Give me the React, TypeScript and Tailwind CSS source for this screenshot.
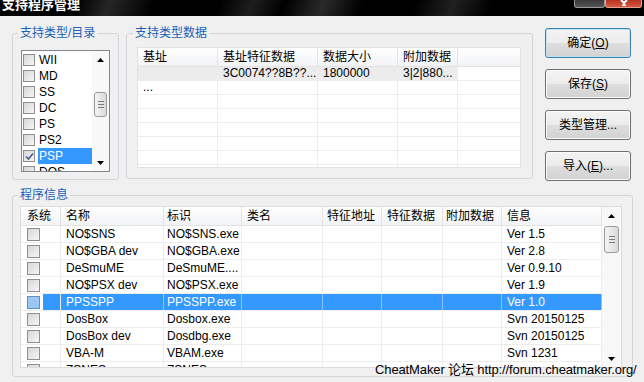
import React from 'react';

const FONT = "font-['Liberation_Sans','Noto_Sans_CJK_SC',sans-serif]";

const Arrow = ({ down = false }: { down?: boolean }) => (
  <svg width="7" height="4" viewBox="0 0 7 4">
    <path d={down ? 'M0 0H7L3.5 4Z' : 'M0 4H7L3.5 0Z'} fill="#000" />
  </svg>
);

const Grip = () => (
  <svg width="6" height="7" viewBox="0 0 6 7">
    <path d="M0 0.5H6M0 3.5H6M0 6.5H6" stroke="#7a7a7a" strokeWidth="1" />
  </svg>
);

const ScrollBar = ({ width, thumb }: { width: string; thumb: string }) => (
  <div className={`${width} h-full flex flex-col bg-[#f8f8f8]`}>
    <div className="h-[17px] flex items-center justify-center shrink-0">
      <Arrow />
    </div>
    <div className="flex-1 flex flex-col">
      <div className={`${thumb} mx-[2px] rounded-[3px] border border-[#9a9a9a] bg-gradient-to-r from-[#f5f5f5] to-[#dadada] flex items-center justify-center`}>
        <Grip />
      </div>
    </div>
    <div className="h-[17px] flex items-center justify-center shrink-0">
      <Arrow down />
    </div>
  </div>
);

const Check = ({ big = false, checked = false, tint = false }: { big?: boolean; checked?: boolean; tint?: boolean }) => (
  <span
    className={`shrink-0 border flex items-center justify-center ${big ? 'w-[13px] h-[13px]' : 'w-[12px] h-[12px]'} ${
      tint ? 'border-[#5f8fc8] bg-[#9cc6f0]' : 'border-[#8f8f8f] bg-gradient-to-br from-[#d6d6d6] to-[#f7f7f7]'
    }`}
  >
    {checked && (
      <svg width="9" height="9" viewBox="0 0 9 9">
        <path d="M1 4.5L3.5 7L8 1.5" stroke="#4a5c94" strokeWidth="1.6" fill="none" />
      </svg>
    )}
  </span>
);

const Button = ({ children, main = false }: { children: React.ReactNode; main?: boolean }) => (
  <div
    className={`h-[30px] w-[86px] rounded-[3px] border flex items-center justify-center text-[12px] text-black bg-[linear-gradient(#f4f4f4,#ececec_48%,#dedede_52%,#d2d2d2)] ${
      main ? 'border-[#3c7fb1] shadow-[inset_0_0_0_1px_#bfe4f8]' : 'border-[#707070] shadow-[inset_0_0_0_1px_#fbfbfb]'
    }`}
  >
    {children}
  </div>
);

const listItems = ['WII', 'MD', 'SS', 'DC', 'PS', 'PS2', 'PSP', 'DOS'];

const t2Cols = ['w-[80px]', 'w-[100px]', 'w-[80px]', 'w-[60px]'];
const t2Head = ['基址', '基址特征数据', '数据大小', '附加数据'];

const t3Cols = ['w-[40px]', 'w-[103px]', 'w-[78px]', 'w-[81px]', 'w-[59px]', 'w-[61px]', 'w-[59px]', 'w-[100px]'];
const t3Pad = ['pl-[6px]', 'pl-[5px]', 'pl-[3px]', 'pl-[5px]', 'pl-[4px]', 'pl-[5px]', 'pl-[3px]', 'pl-[5px]'];
const t3Head = ['系统', '名称', '标识', '类名', '特征地址', '特征数据', '附加数据', '信息'];

const programs = [
  ['NO$SNS', 'NO$SNS.exe', 'Ver 1.5'],
  ['NO$GBA dev', 'NO$GBA.exe', 'Ver 2.8'],
  ['DeSmuME', 'DeSmuME....', 'Ver 0.9.10'],
  ['NO$PSX dev', 'NO$PSX.exe', 'Ver 1.9'],
  ['PPSSPP', 'PPSSPP.exe', 'Ver 1.0'],
  ['DosBox', 'Dosbox.exe', 'Svn 20150125'],
  ['DosBox dev', 'Dosdbg.exe', 'Svn 20150125'],
  ['VBA-M', 'VBAM.exe', 'Svn 1231'],
  ['ZSNES', 'ZSNES.exe', ''],
];

export default function App() {
  return (
    <div className={`${FONT} relative w-[644px] h-[382px] overflow-hidden bg-[#f0f0f0] text-[12px] text-black flex flex-col`}>
      {/* title bar */}
      <div className="h-[16px] shrink-0 flex justify-between overflow-hidden bg-[linear-gradient(110deg,#000_0%,#000_12%,#262626_17%,#000_24%,#000_34%,#1e1e1e_39%,#000_44%,#2a2a2a_50%,#000_56%,#000_64%,#202020_70%,#000_76%,#000_100%)]">
        <div className="ml-[2px] -mt-[2px] text-white font-bold text-[13px] leading-[14px]">支持程序管理</div>
        <div className="flex mr-[2px]">
          <div className="w-[31px] h-[8px] rounded-b-[3px] border border-t-0 border-[#9a9a9a] bg-gradient-to-b from-[#3a3a3a] to-[#555]" />
          <div className="w-[37px] h-[8px] rounded-b-[3px] border border-t-0 border-[#e7a192] bg-gradient-to-b from-[#b5331f] to-[#d45a44] flex justify-center">
            <svg width="10" height="6" viewBox="0 0 10 6">
              <path d="M2 0L5 3L8 0M3.5 6L5 4.5L6.5 6" stroke="#fff" strokeWidth="2" fill="none" />
            </svg>
          </div>
        </div>
      </div>

      {/* top section */}
      <div className="flex items-start pl-[12px] mt-[10px]">
        <fieldset className="w-[107px] h-[154px] border border-[#d2d6da] rounded-[3px]">
          <legend className="ml-[5px] px-[2px] leading-[14px] text-[#1a5fb8]">支持类型/目录</legend>
          <div className="mt-[10px] ml-[8px] w-[89px] h-[122px] border border-[#828790] bg-white flex overflow-hidden">
            <div className="flex-1 flex flex-col pt-[1px]">
              {listItems.map((it) => (
                <div key={it} className="h-[16px] shrink-0 flex items-center">
                  <span className="ml-[1px]">
                    <Check checked={it === 'PSP'} />
                  </span>
                  <span
                    className={`ml-[3px] flex-1 h-[16px] leading-[16px] pl-[1px] ${
                      it === 'PSP' ? 'bg-[#3399ff] text-white' : ''
                    }`}
                  >
                    {it}
                  </span>
                </div>
              ))}
            </div>
            <ScrollBar width="w-[17px]" thumb="mt-[24px] h-[25px]" />
          </div>
        </fieldset>

        <fieldset className="ml-[7px] w-[407px] h-[153px] border border-[#d2d6da] rounded-[3px]">
          <legend className="ml-[6px] px-[2px] leading-[14px] text-[#1a5fb8]">支持类型数据</legend>
          <div className="mt-[7px] ml-[10px] w-[384px] h-[121px] border border-[#e2e2e2] bg-white flex flex-col overflow-hidden">
            <div className="h-[19px] shrink-0 flex bg-gradient-to-b from-white to-[#f2f3f5] border-b border-[#e3e3e3]">
              {t2Head.map((h, i) => (
                <div key={h} className={`${t2Cols[i]} shrink-0 pl-[5px] leading-[18px] border-r border-[#e3e3e3]`}>
                  {h}
                </div>
              ))}
              <div className="flex-1" />
            </div>
            {Array.from({ length: 8 }).map((_, r) => (
              <div key={r} className="h-[14px] shrink-0 flex border-b border-[#ededed]">
                {t2Cols.map((w, i) => (
                  <div
                    key={i}
                    className={`${w} shrink-0 pl-[5px] leading-[13px] border-r border-[#ededed] whitespace-nowrap overflow-hidden ${
                      r === 0 ? 'bg-[#ececec]' : ''
                    }`}
                  >
                    {r === 0 && i === 1 && '3C0074??8B??...'}
                    {r === 0 && i === 2 && '1800000'}
                    {r === 0 && i === 3 && '3|2|880...'}
                    {r === 1 && i === 0 && '...'}
                  </div>
                ))}
                <div className="flex-1" />
              </div>
            ))}
          </div>
        </fieldset>

        <div className="ml-[12px] mt-[2px] flex flex-col gap-[11px]">
          <Button main>
            确定(<span className="underline">O</span>)
          </Button>
          <Button>
            保存(<span className="underline">S</span>)
          </Button>
          <Button>类型管理...</Button>
          <Button>
            导入(<span className="underline">E</span>)...
          </Button>
        </div>
      </div>

      {/* program info */}
      <fieldset className="ml-[12px] mt-[7px] w-[621px] h-[189px] border border-[#d2d6da] rounded-[3px]">
        <legend className="ml-[5px] px-[2px] leading-[14px] text-[#1a5fb8]">程序信息</legend>
        <div className="mt-[4px] ml-[7px] w-[602px] h-[162px] border border-[#dcdcdc] bg-white flex overflow-hidden">
          <div className="w-[581px] flex flex-col">
            <div className="h-[19px] shrink-0 flex bg-gradient-to-b from-white to-[#f2f3f5] border-b border-[#e3e3e3]">
              {t3Head.map((h, i) => (
                <div key={h} className={`${t3Cols[i]} ${t3Pad[i]} shrink-0 leading-[18px] border-r border-[#e3e3e3]`}>
                  {h}
                </div>
              ))}
            </div>
            {programs.map((p, r) => {
              const sel = r === 4;
              return (
                <div key={r} className="h-[17px] shrink-0 flex border-b border-[#ededed]">
                  {t3Cols.map((w, i) => {
                    if (i === 0) {
                      return (
                        <div key={i} className={`${w} shrink-0 flex items-center border-r border-[#ededed]`}>
                          <span className="ml-[6px]">
                            <Check big tint={sel} />
                          </span>
                          <span className={`ml-[3px] flex-1 h-full ${sel ? 'bg-[#3399ff]' : ''}`} />
                        </div>
                      );
                    }
                    const text = i === 1 ? p[0] : i === 2 ? p[1] : i === 7 ? p[2] : '';
                    return (
                      <div
                        key={i}
                        className={`${w} ${t3Pad[i]} shrink-0 leading-[17px] whitespace-nowrap overflow-hidden border-r ${
                          sel ? 'bg-[#3399ff] text-white border-[#8cc4ff]' : 'border-[#ededed]'
                        }`}
                      >
                        {text}
                      </div>
                    );
                  })}
                </div>
              );
            })}
          </div>
          <ScrollBar width="w-[19px]" thumb="mt-[2px] h-[27px]" />
        </div>
      </fieldset>

      {/* forum watermark */}
      <div className="absolute left-[375px] top-[362px] text-[13px] leading-[15px] tracking-[-0.12px] text-black whitespace-nowrap">
        CheatMaker 论坛 http://forum.cheatmaker.org/
      </div>
    </div>
  );
}
